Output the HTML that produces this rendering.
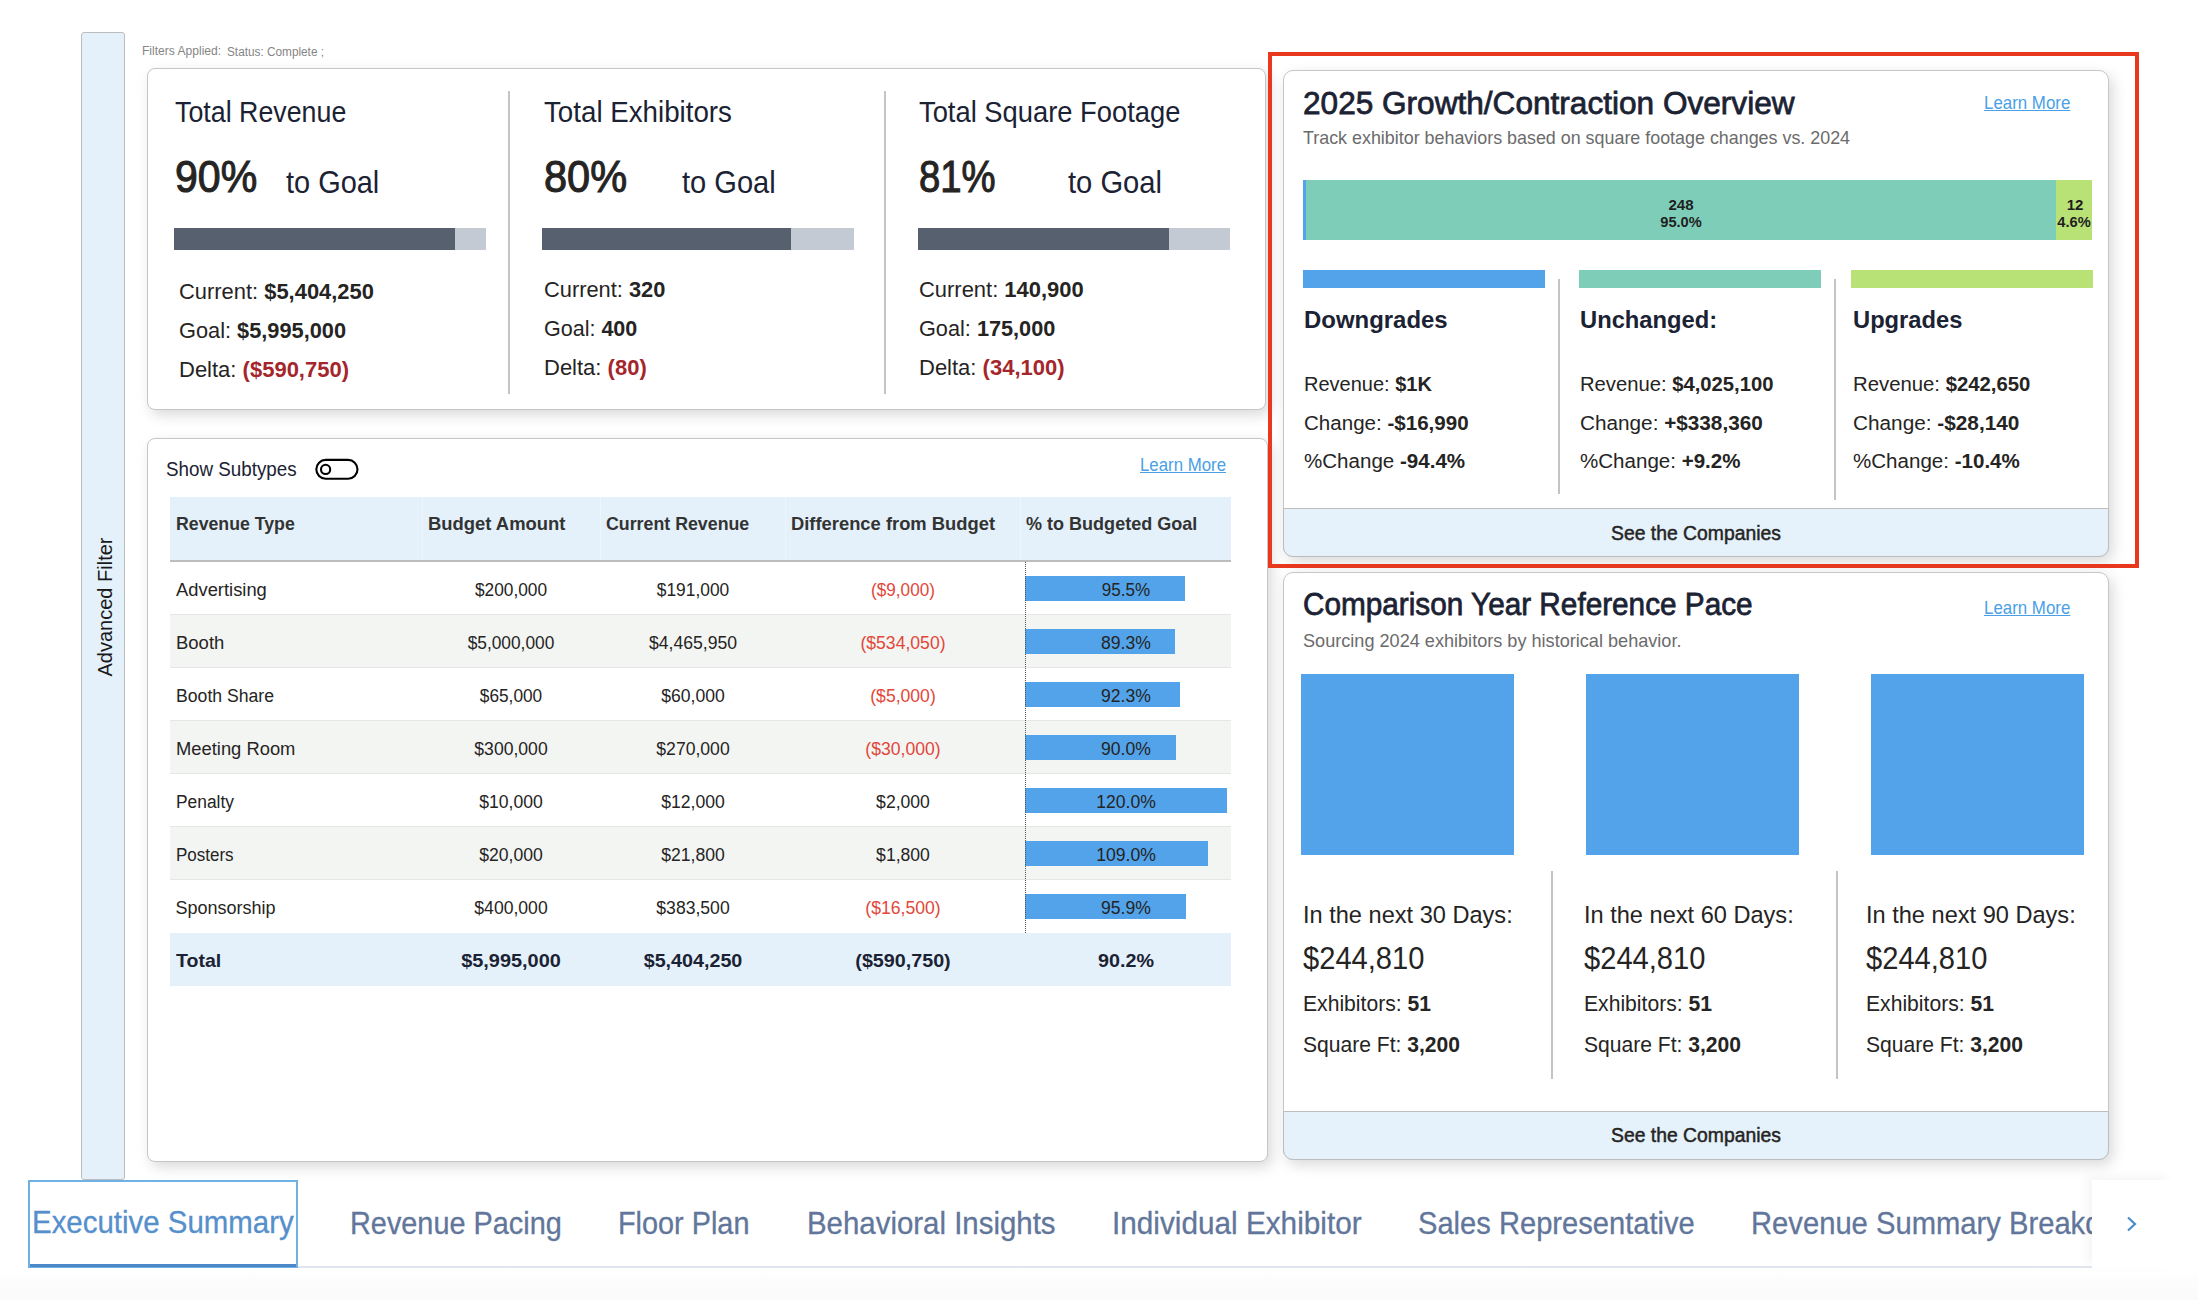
<!DOCTYPE html>
<html><head><meta charset="utf-8"><style>
html,body{margin:0;padding:0;}
body{width:2198px;height:1300px;position:relative;overflow:hidden;background:#fff;font-family:"Liberation Sans",sans-serif;}
.t{position:absolute;white-space:nowrap;line-height:1;}
b{font-weight:700;}
</style></head><body>
<div style="position:absolute;left:0px;top:1268px;width:2198px;height:32px;background:linear-gradient(#fff,#fdfdfd 35%,#fbfbfb);"></div>
<div style="position:absolute;left:81px;top:32px;width:44px;height:1148px;box-sizing:border-box;background:#e4f1fa;border:1.5px solid #bdbdbd;border-radius:3px;"></div>
<div class="t" style="left:104.5px;top:607px;font-size:20px;color:#1a1a1a;transform:translate(-50%,-50%) rotate(-90deg);">Advanced Filter</div>
<div class="t" style="left:142.0px;top:44.6px;font-size:12.5px;color:#858585;font-weight:400;transform-origin:0 0;transform:scaleX(0.9651);"><span>Filters Applied:</span></div>
<div class="t" style="left:227.0px;top:45.6px;font-size:12.5px;color:#858585;font-weight:400;transform-origin:0 0;transform:scaleX(0.9434);"><span>Status: Complete ;</span></div>
<div style="position:absolute;left:147px;top:68px;width:1119px;height:342px;box-sizing:border-box;border:1.5px solid #c6c6c6;border-radius:8px;background:#fff;box-shadow:4px 5px 14px rgba(0,0,0,0.15);"></div>
<div style="position:absolute;left:508px;top:91px;width:2px;height:303px;background:#c4c4c4;"></div>
<div style="position:absolute;left:884px;top:91px;width:2px;height:303px;background:#c4c4c4;"></div>
<div class="t" style="left:175.0px;top:97.3px;font-size:29.5px;color:#1b2233;font-weight:400;transform-origin:0 0;transform:scaleX(0.9083);"><span>Total Revenue</span></div>
<div class="t" style="left:175.0px;top:154.6px;font-size:44.5px;color:#252423;font-weight:400;transform-origin:0 0;transform:scaleX(0.9224);-webkit-text-stroke:1.07px currentColor;"><span>90%</span></div>
<div class="t" style="left:286.0px;top:166.5px;font-size:30.5px;color:#1b2233;font-weight:400;transform-origin:0 0;transform:scaleX(0.9480);"><span>to Goal</span></div>
<div style="position:absolute;left:174px;top:228px;width:312px;height:22px;background:#c4cad4;"></div>
<div style="position:absolute;left:174px;top:228px;width:281px;height:22px;background:#56606f;"></div>
<div class="t" style="left:179.0px;top:281.4px;font-size:22px;color:#252423;font-weight:400;transform-origin:0 0;transform:scaleX(0.9960);"><span>Current: <b>$5,404,250</b></span></div>
<div class="t" style="left:179.0px;top:320.0px;font-size:22px;color:#252423;font-weight:400;transform-origin:0 0;transform:scaleX(0.9893);"><span>Goal: <b>$5,995,000</b></span></div>
<div class="t" style="left:179.0px;top:358.6px;font-size:22px;color:#252423;font-weight:400;transform-origin:0 0;"><span>Delta: <b style="color:#a4262c">($590,750)</b></span></div>
<div class="t" style="left:544.0px;top:97.3px;font-size:29.5px;color:#1b2233;font-weight:400;transform-origin:0 0;transform:scaleX(0.9396);"><span>Total Exhibitors</span></div>
<div class="t" style="left:544.0px;top:154.6px;font-size:44.5px;color:#252423;font-weight:400;transform-origin:0 0;transform:scaleX(0.9328);-webkit-text-stroke:1.07px currentColor;"><span>80%</span></div>
<div class="t" style="left:682.0px;top:166.5px;font-size:30.5px;color:#1b2233;font-weight:400;transform-origin:0 0;transform:scaleX(0.9532);"><span>to Goal</span></div>
<div style="position:absolute;left:542px;top:228px;width:312px;height:22px;background:#c4cad4;"></div>
<div style="position:absolute;left:542px;top:228px;width:249px;height:22px;background:#56606f;"></div>
<div class="t" style="left:544.0px;top:279.4px;font-size:22px;color:#252423;font-weight:400;transform-origin:0 0;transform:scaleX(0.9918);"><span>Current: <b>320</b></span></div>
<div class="t" style="left:544.0px;top:318.0px;font-size:22px;color:#252423;font-weight:400;transform-origin:0 0;transform:scaleX(0.9777);"><span>Goal: <b>400</b></span></div>
<div class="t" style="left:544.0px;top:356.6px;font-size:22px;color:#252423;font-weight:400;transform-origin:0 0;"><span>Delta: <b style="color:#a4262c">(80)</b></span></div>
<div class="t" style="left:919.0px;top:97.3px;font-size:29.5px;color:#1b2233;font-weight:400;transform-origin:0 0;transform:scaleX(0.9267);"><span>Total Square Footage</span></div>
<div class="t" style="left:919.0px;top:154.6px;font-size:44.5px;color:#252423;font-weight:400;transform-origin:0 0;transform:scaleX(0.8599);-webkit-text-stroke:1.07px currentColor;"><span>81%</span></div>
<div class="t" style="left:1068.0px;top:166.5px;font-size:30.5px;color:#1b2233;font-weight:400;transform-origin:0 0;transform:scaleX(0.9553);"><span>to Goal</span></div>
<div style="position:absolute;left:918px;top:228px;width:312px;height:22px;background:#c4cad4;"></div>
<div style="position:absolute;left:918px;top:228px;width:251px;height:22px;background:#56606f;"></div>
<div class="t" style="left:919.0px;top:279.4px;font-size:22px;color:#252423;font-weight:400;transform-origin:0 0;transform:scaleX(0.9969);"><span>Current: <b>140,900</b></span></div>
<div class="t" style="left:919.0px;top:318.0px;font-size:22px;color:#252423;font-weight:400;transform-origin:0 0;transform:scaleX(0.9860);"><span>Goal: <b>175,000</b></span></div>
<div class="t" style="left:919.0px;top:356.6px;font-size:22px;color:#252423;font-weight:400;transform-origin:0 0;"><span>Delta: <b style="color:#a4262c">(34,100)</b></span></div>
<div style="position:absolute;left:147px;top:438px;width:1121px;height:724px;box-sizing:border-box;border:1.5px solid #c6c6c6;border-radius:8px;background:#fff;box-shadow:4px 5px 14px rgba(0,0,0,0.15);"></div>
<div class="t" style="left:166.0px;top:459.1px;font-size:20.3px;color:#1b2233;font-weight:400;transform-origin:0 0;transform:scaleX(0.9268);"><span>Show Subtypes</span></div>
<svg style="position:absolute;left:0;top:0" width="400" height="500"><rect x="316.3" y="459.9" width="41.2" height="18.8" rx="9.4" fill="none" stroke="#000" stroke-width="2.1"/><circle cx="325.6" cy="469.4" r="4.6" fill="none" stroke="#000" stroke-width="2.1"/></svg>
<div class="t" style="left:1140.0px;top:455.8px;font-size:18px;color:#4a9fe5;font-weight:400;transform-origin:0 0;transform:scaleX(0.9343);text-decoration:underline;"><span>Learn More</span></div>
<div style="position:absolute;left:170px;top:497px;width:1061px;height:64px;background:#e4f1fa;"></div>
<div style="position:absolute;left:422px;top:497px;width:1px;height:64px;background:#eef6fc;"></div>
<div style="position:absolute;left:600px;top:497px;width:1px;height:64px;background:#eef6fc;"></div>
<div style="position:absolute;left:785px;top:497px;width:1px;height:64px;background:#eef6fc;"></div>
<div style="position:absolute;left:1020px;top:497px;width:1px;height:64px;background:#eef6fc;"></div>
<div style="position:absolute;left:170px;top:560px;width:1061px;height:2px;background:#bdbdbd;"></div>
<div class="t" style="left:175.5px;top:514.6px;font-size:18.2px;color:#333;font-weight:700;transform-origin:0 0;transform:scaleX(0.9737);"><span>Revenue Type</span></div>
<div class="t" style="left:427.5px;top:514.6px;font-size:18.2px;color:#333;font-weight:700;transform-origin:0 0;transform:scaleX(1.0124);"><span>Budget Amount</span></div>
<div class="t" style="left:605.5px;top:514.6px;font-size:18.2px;color:#333;font-weight:700;transform-origin:0 0;transform:scaleX(0.9775);"><span>Current Revenue</span></div>
<div class="t" style="left:790.5px;top:514.6px;font-size:18.2px;color:#333;font-weight:700;transform-origin:0 0;transform:scaleX(1.0094);"><span>Difference from Budget</span></div>
<div class="t" style="left:1025.5px;top:514.6px;font-size:18.2px;color:#333;font-weight:700;transform-origin:0 0;transform:scaleX(0.9913);"><span>% to Budgeted Goal</span></div>
<div class="t" style="left:175.5px;top:580.8px;font-size:18px;color:#252423;font-weight:400;transform-origin:0 0;transform:scaleX(1.0197);"><span>Advertising</span></div>
<div class="t" style="left:-89.0px;width:1200px;text-align:center;top:580.8px;font-size:18px;color:#252423;font-weight:400;transform-origin:50% 0;transform:scaleX(0.9608);"><span>$200,000</span></div>
<div class="t" style="left:92.5px;width:1200px;text-align:center;top:580.8px;font-size:18px;color:#252423;font-weight:400;transform-origin:50% 0;transform:scaleX(0.9649);"><span>$191,000</span></div>
<div class="t" style="left:302.5px;width:1200px;text-align:center;top:580.8px;font-size:18px;color:#e2473a;font-weight:400;transform-origin:50% 0;transform:scaleX(0.9520);"><span>($9,000)</span></div>
<div style="position:absolute;left:1025px;top:576px;width:160px;height:25px;background:#52a3ea;"></div>
<div class="t" style="left:525.5px;width:1200px;text-align:center;top:580.8px;font-size:18px;color:#252423;font-weight:400;transform-origin:50% 0;transform:scaleX(0.9466);"><span>95.5%</span></div>
<div style="position:absolute;left:170px;top:615px;width:1061px;height:53px;background:#f3f5f3;"></div>
<div style="position:absolute;left:170px;top:614px;width:1061px;height:1px;background:#e6e6e6;"></div>
<div class="t" style="left:175.5px;top:633.8px;font-size:18px;color:#252423;font-weight:400;transform-origin:0 0;transform:scaleX(1.0268);"><span>Booth</span></div>
<div class="t" style="left:-89.0px;width:1200px;text-align:center;top:633.8px;font-size:18px;color:#252423;font-weight:400;transform-origin:50% 0;transform:scaleX(0.9617);"><span>$5,000,000</span></div>
<div class="t" style="left:92.5px;width:1200px;text-align:center;top:633.8px;font-size:18px;color:#252423;font-weight:400;transform-origin:50% 0;transform:scaleX(0.9769);"><span>$4,465,950</span></div>
<div class="t" style="left:302.5px;width:1200px;text-align:center;top:633.8px;font-size:18px;color:#e2473a;font-weight:400;transform-origin:50% 0;transform:scaleX(0.9769);"><span>($534,050)</span></div>
<div style="position:absolute;left:1025px;top:629px;width:150px;height:25px;background:#52a3ea;"></div>
<div class="t" style="left:525.5px;width:1200px;text-align:center;top:633.8px;font-size:18px;color:#252423;font-weight:400;transform-origin:50% 0;transform:scaleX(0.9769);"><span>89.3%</span></div>
<div style="position:absolute;left:170px;top:667px;width:1061px;height:1px;background:#e6e6e6;"></div>
<div class="t" style="left:175.5px;top:686.8px;font-size:18px;color:#252423;font-weight:400;transform-origin:0 0;transform:scaleX(0.9798);"><span>Booth Share</span></div>
<div class="t" style="left:-89.0px;width:1200px;text-align:center;top:686.8px;font-size:18px;color:#252423;font-weight:400;transform-origin:50% 0;transform:scaleX(0.9594);"><span>$65,000</span></div>
<div class="t" style="left:92.5px;width:1200px;text-align:center;top:686.8px;font-size:18px;color:#252423;font-weight:400;transform-origin:50% 0;transform:scaleX(0.9769);"><span>$60,000</span></div>
<div class="t" style="left:302.5px;width:1200px;text-align:center;top:686.8px;font-size:18px;color:#e2473a;font-weight:400;transform-origin:50% 0;transform:scaleX(0.9769);"><span>($5,000)</span></div>
<div style="position:absolute;left:1025px;top:682px;width:155px;height:25px;background:#52a3ea;"></div>
<div class="t" style="left:525.5px;width:1200px;text-align:center;top:686.8px;font-size:18px;color:#252423;font-weight:400;transform-origin:50% 0;transform:scaleX(0.9769);"><span>92.3%</span></div>
<div style="position:absolute;left:170px;top:721px;width:1061px;height:53px;background:#f3f5f3;"></div>
<div style="position:absolute;left:170px;top:720px;width:1061px;height:1px;background:#e6e6e6;"></div>
<div class="t" style="left:175.5px;top:739.8px;font-size:18px;color:#252423;font-weight:400;transform-origin:0 0;transform:scaleX(1.0200);"><span>Meeting Room</span></div>
<div class="t" style="left:-89.0px;width:1200px;text-align:center;top:739.8px;font-size:18px;color:#252423;font-weight:400;transform-origin:50% 0;transform:scaleX(0.9769);"><span>$300,000</span></div>
<div class="t" style="left:92.5px;width:1200px;text-align:center;top:739.8px;font-size:18px;color:#252423;font-weight:400;transform-origin:50% 0;transform:scaleX(0.9769);"><span>$270,000</span></div>
<div class="t" style="left:302.5px;width:1200px;text-align:center;top:739.8px;font-size:18px;color:#e2473a;font-weight:400;transform-origin:50% 0;transform:scaleX(0.9769);"><span>($30,000)</span></div>
<div style="position:absolute;left:1025px;top:735px;width:151px;height:25px;background:#52a3ea;"></div>
<div class="t" style="left:525.5px;width:1200px;text-align:center;top:739.8px;font-size:18px;color:#252423;font-weight:400;transform-origin:50% 0;transform:scaleX(0.9769);"><span>90.0%</span></div>
<div style="position:absolute;left:170px;top:773px;width:1061px;height:1px;background:#e6e6e6;"></div>
<div class="t" style="left:175.5px;top:792.8px;font-size:18px;color:#252423;font-weight:400;transform-origin:0 0;transform:scaleX(0.9650);"><span>Penalty</span></div>
<div class="t" style="left:-89.0px;width:1200px;text-align:center;top:792.8px;font-size:18px;color:#252423;font-weight:400;transform-origin:50% 0;transform:scaleX(0.9769);"><span>$10,000</span></div>
<div class="t" style="left:92.5px;width:1200px;text-align:center;top:792.8px;font-size:18px;color:#252423;font-weight:400;transform-origin:50% 0;transform:scaleX(0.9769);"><span>$12,000</span></div>
<div class="t" style="left:302.5px;width:1200px;text-align:center;top:792.8px;font-size:18px;color:#252423;font-weight:400;transform-origin:50% 0;transform:scaleX(0.9769);"><span>$2,000</span></div>
<div style="position:absolute;left:1025px;top:788px;width:202px;height:25px;background:#52a3ea;"></div>
<div class="t" style="left:525.5px;width:1200px;text-align:center;top:792.8px;font-size:18px;color:#252423;font-weight:400;transform-origin:50% 0;transform:scaleX(0.9769);"><span>120.0%</span></div>
<div style="position:absolute;left:170px;top:827px;width:1061px;height:53px;background:#f3f5f3;"></div>
<div style="position:absolute;left:170px;top:826px;width:1061px;height:1px;background:#e6e6e6;"></div>
<div class="t" style="left:175.5px;top:845.8px;font-size:18px;color:#252423;font-weight:400;transform-origin:0 0;transform:scaleX(0.9441);"><span>Posters</span></div>
<div class="t" style="left:-89.0px;width:1200px;text-align:center;top:845.8px;font-size:18px;color:#252423;font-weight:400;transform-origin:50% 0;transform:scaleX(0.9769);"><span>$20,000</span></div>
<div class="t" style="left:92.5px;width:1200px;text-align:center;top:845.8px;font-size:18px;color:#252423;font-weight:400;transform-origin:50% 0;transform:scaleX(0.9769);"><span>$21,800</span></div>
<div class="t" style="left:302.5px;width:1200px;text-align:center;top:845.8px;font-size:18px;color:#252423;font-weight:400;transform-origin:50% 0;transform:scaleX(0.9769);"><span>$1,800</span></div>
<div style="position:absolute;left:1025px;top:841px;width:183px;height:25px;background:#52a3ea;"></div>
<div class="t" style="left:525.5px;width:1200px;text-align:center;top:845.8px;font-size:18px;color:#252423;font-weight:400;transform-origin:50% 0;transform:scaleX(0.9769);"><span>109.0%</span></div>
<div style="position:absolute;left:170px;top:879px;width:1061px;height:1px;background:#e6e6e6;"></div>
<div class="t" style="left:175.5px;top:898.8px;font-size:18px;color:#252423;font-weight:400;transform-origin:0 0;"><span>Sponsorship</span></div>
<div class="t" style="left:-89.0px;width:1200px;text-align:center;top:898.8px;font-size:18px;color:#252423;font-weight:400;transform-origin:50% 0;transform:scaleX(0.9769);"><span>$400,000</span></div>
<div class="t" style="left:92.5px;width:1200px;text-align:center;top:898.8px;font-size:18px;color:#252423;font-weight:400;transform-origin:50% 0;transform:scaleX(0.9769);"><span>$383,500</span></div>
<div class="t" style="left:302.5px;width:1200px;text-align:center;top:898.8px;font-size:18px;color:#e2473a;font-weight:400;transform-origin:50% 0;transform:scaleX(0.9769);"><span>($16,500)</span></div>
<div style="position:absolute;left:1025px;top:894px;width:161px;height:25px;background:#52a3ea;"></div>
<div class="t" style="left:525.5px;width:1200px;text-align:center;top:898.8px;font-size:18px;color:#252423;font-weight:400;transform-origin:50% 0;transform:scaleX(0.9769);"><span>95.9%</span></div>
<div style="position:absolute;left:1025px;top:562px;width:1px;height:371px;border-left:1px dotted #555;"></div>
<div style="position:absolute;left:170px;top:933px;width:1061px;height:53px;background:#e4f1fa;"></div>
<div class="t" style="left:175.5px;top:950.9px;font-size:19px;color:#1b2233;font-weight:700;transform-origin:0 0;transform:scaleX(1.0270);"><span>Total</span></div>
<div class="t" style="left:-89.0px;width:1200px;text-align:center;top:950.9px;font-size:19px;color:#1b2233;font-weight:700;transform-origin:50% 0;transform:scaleX(1.0484);"><span>$5,995,000</span></div>
<div class="t" style="left:92.5px;width:1200px;text-align:center;top:950.9px;font-size:19px;color:#1b2233;font-weight:700;transform-origin:50% 0;transform:scaleX(1.0377);"><span>$5,404,250</span></div>
<div class="t" style="left:302.5px;width:1200px;text-align:center;top:950.9px;font-size:19px;color:#1b2233;font-weight:700;transform-origin:50% 0;transform:scaleX(1.0377);"><span>($590,750)</span></div>
<div class="t" style="left:525.5px;width:1200px;text-align:center;top:950.9px;font-size:19px;color:#1b2233;font-weight:700;transform-origin:50% 0;transform:scaleX(1.0377);"><span>90.2%</span></div>
<div style="position:absolute;left:1283px;top:70px;width:826px;height:487px;box-sizing:border-box;border:1.5px solid #c6c6c6;border-radius:8px;background:#fff;box-shadow:4px 5px 14px rgba(0,0,0,0.15);border-radius:10px;"></div>
<div class="t" style="left:1303.0px;top:86.5px;font-size:32px;color:#1b2233;font-weight:400;transform-origin:0 0;transform:scaleX(0.9870);-webkit-text-stroke:0.77px currentColor;"><span>2025 Growth/Contraction Overview</span></div>
<div class="t" style="left:1984.0px;top:94.3px;font-size:18.5px;color:#4a9fe5;font-weight:400;transform-origin:0 0;transform:scaleX(0.9123);text-decoration:underline;"><span>Learn More</span></div>
<div class="t" style="left:1303.0px;top:129.3px;font-size:18.6px;color:#6b6b6b;font-weight:400;transform-origin:0 0;transform:scaleX(0.9617);"><span>Track exhibitor behaviors based on square footage changes vs. 2024</span></div>
<div style="position:absolute;left:1303px;top:180px;width:789px;height:60px;background:#7ecdb9;"></div>
<div style="position:absolute;left:1303px;top:180px;width:3px;height:60px;background:#52a3ea;"></div>
<div style="position:absolute;left:2056px;top:180px;width:36px;height:60px;background:#b8e176;"></div>
<div class="t" style="left:1081.0px;width:1200px;text-align:center;top:197.7px;font-size:14.5px;color:#1f1f1f;font-weight:700;transform-origin:50% 0;transform:scaleX(1.0414);"><span>248</span></div>
<div class="t" style="left:1081.0px;width:1200px;text-align:center;top:214.7px;font-size:14.5px;color:#1f1f1f;font-weight:700;transform-origin:50% 0;transform:scaleX(1.0086);"><span>95.0%</span></div>
<div class="t" style="left:1474.7px;width:1200px;text-align:center;top:197.7px;font-size:14.5px;color:#1f1f1f;font-weight:700;transform-origin:50% 0;transform:scaleX(1.0347);"><span>12</span></div>
<div class="t" style="left:1473.8px;width:1200px;text-align:center;top:214.7px;font-size:14.5px;color:#1f1f1f;font-weight:700;transform-origin:50% 0;transform:scaleX(1.0095);"><span>4.6%</span></div>
<div style="position:absolute;left:1303px;top:270px;width:242px;height:18px;background:#52a3ea;"></div>
<div style="position:absolute;left:1579px;top:270px;width:242px;height:18px;background:#7ecdb9;"></div>
<div style="position:absolute;left:1851px;top:270px;width:242px;height:18px;background:#b8e176;"></div>
<div style="position:absolute;left:1558px;top:279px;width:2px;height:215px;background:#c4c4c4;"></div>
<div style="position:absolute;left:1834px;top:279px;width:2px;height:221px;background:#c4c4c4;"></div>
<div class="t" style="left:1304.0px;top:308.4px;font-size:24.5px;color:#1b2233;font-weight:700;transform-origin:0 0;transform:scaleX(0.9769);"><span>Downgrades</span></div>
<div class="t" style="left:1304.0px;top:375.1px;font-size:19.6px;color:#252423;font-weight:400;transform-origin:0 0;transform:scaleX(1.0209);"><span>Revenue: <b>$1K</b></span></div>
<div class="t" style="left:1304.0px;top:413.6px;font-size:19.6px;color:#252423;font-weight:400;transform-origin:0 0;transform:scaleX(1.0493);"><span>Change: <b>-$16,990</b></span></div>
<div class="t" style="left:1304.0px;top:452.1px;font-size:19.6px;color:#252423;font-weight:400;transform-origin:0 0;transform:scaleX(1.0490);"><span>%Change <b>-94.4%</b></span></div>
<div class="t" style="left:1580.0px;top:308.4px;font-size:24.5px;color:#1b2233;font-weight:700;transform-origin:0 0;transform:scaleX(0.9693);"><span>Unchanged:</span></div>
<div class="t" style="left:1580.0px;top:375.1px;font-size:19.6px;color:#252423;font-weight:400;transform-origin:0 0;transform:scaleX(1.0320);"><span>Revenue: <b>$4,025,100</b></span></div>
<div class="t" style="left:1580.0px;top:413.6px;font-size:19.6px;color:#252423;font-weight:400;transform-origin:0 0;transform:scaleX(1.0582);"><span>Change: <b>+$338,360</b></span></div>
<div class="t" style="left:1580.0px;top:452.1px;font-size:19.6px;color:#252423;font-weight:400;transform-origin:0 0;transform:scaleX(1.0488);"><span>%Change: <b>+9.2%</b></span></div>
<div class="t" style="left:1853.0px;top:308.4px;font-size:24.5px;color:#1b2233;font-weight:700;transform-origin:0 0;transform:scaleX(0.9683);"><span>Upgrades</span></div>
<div class="t" style="left:1853.0px;top:375.1px;font-size:19.6px;color:#252423;font-weight:400;transform-origin:0 0;transform:scaleX(1.0372);"><span>Revenue: <b>$242,650</b></span></div>
<div class="t" style="left:1853.0px;top:413.6px;font-size:19.6px;color:#252423;font-weight:400;transform-origin:0 0;transform:scaleX(1.0603);"><span>Change: <b>-$28,140</b></span></div>
<div class="t" style="left:1853.0px;top:452.1px;font-size:19.6px;color:#252423;font-weight:400;transform-origin:0 0;transform:scaleX(1.0489);"><span>%Change: <b>-10.4%</b></span></div>
<div style="position:absolute;left:1283px;top:508px;width:826px;height:49px;box-sizing:border-box;background:#e5f2fb;border:1.5px solid #bdbdbd;border-radius:0 0 10px 10px;"></div>
<div class="t" style="left:1096.4px;width:1200px;text-align:center;top:522.7px;font-size:20px;color:#252423;font-weight:400;transform-origin:50% 0;transform:scaleX(0.9664);-webkit-text-stroke:0.48px currentColor;"><span>See the Companies</span></div>
<div style="position:absolute;left:1268px;top:52px;width:871px;height:516px;box-sizing:border-box;border:4px solid #e8391e;"></div>
<div style="position:absolute;left:1283px;top:572px;width:826px;height:588px;box-sizing:border-box;border:1.5px solid #c6c6c6;border-radius:8px;background:#fff;box-shadow:4px 5px 14px rgba(0,0,0,0.15);border-radius:10px;"></div>
<div class="t" style="left:1303.0px;top:588.4px;font-size:32px;color:#1b2233;font-weight:400;transform-origin:0 0;transform:scaleX(0.9292);-webkit-text-stroke:0.77px currentColor;"><span>Comparison Year Reference Pace</span></div>
<div class="t" style="left:1984.0px;top:598.9px;font-size:18.5px;color:#4a9fe5;font-weight:400;transform-origin:0 0;transform:scaleX(0.9123);text-decoration:underline;"><span>Learn More</span></div>
<div class="t" style="left:1303.0px;top:631.8px;font-size:18.6px;color:#6b6b6b;font-weight:400;transform-origin:0 0;transform:scaleX(0.9739);"><span>Sourcing 2024 exhibitors by historical behavior.</span></div>
<div style="position:absolute;left:1301px;top:674px;width:213px;height:181px;background:#52a3ea;"></div>
<div style="position:absolute;left:1586px;top:674px;width:213px;height:181px;background:#52a3ea;"></div>
<div style="position:absolute;left:1871px;top:674px;width:213px;height:181px;background:#52a3ea;"></div>
<div style="position:absolute;left:1551px;top:871px;width:2px;height:208px;background:#c4c4c4;"></div>
<div style="position:absolute;left:1836px;top:871px;width:2px;height:208px;background:#c4c4c4;"></div>
<div class="t" style="left:1303.0px;top:903.5px;font-size:23.7px;color:#252423;font-weight:400;transform-origin:0 0;transform:scaleX(0.9953);"><span>In the next 30 Days:</span></div>
<div class="t" style="left:1303.0px;top:943.9px;font-size:30.8px;color:#252423;font-weight:400;transform-origin:0 0;transform:scaleX(0.9454);"><span>$244,810</span></div>
<div class="t" style="left:1303.0px;top:993.6px;font-size:21.5px;color:#252423;font-weight:400;transform-origin:0 0;transform:scaleX(0.9822);"><span>Exhibitors: <b>51</b></span></div>
<div class="t" style="left:1303.0px;top:1034.5px;font-size:21.5px;color:#252423;font-weight:400;transform-origin:0 0;transform:scaleX(0.9800);"><span>Square Ft: <b>3,200</b></span></div>
<div class="t" style="left:1584.3px;top:903.5px;font-size:23.7px;color:#252423;font-weight:400;transform-origin:0 0;transform:scaleX(0.9953);"><span>In the next 60 Days:</span></div>
<div class="t" style="left:1584.3px;top:943.9px;font-size:30.8px;color:#252423;font-weight:400;transform-origin:0 0;transform:scaleX(0.9454);"><span>$244,810</span></div>
<div class="t" style="left:1584.3px;top:993.6px;font-size:21.5px;color:#252423;font-weight:400;transform-origin:0 0;transform:scaleX(0.9822);"><span>Exhibitors: <b>51</b></span></div>
<div class="t" style="left:1584.3px;top:1034.5px;font-size:21.5px;color:#252423;font-weight:400;transform-origin:0 0;transform:scaleX(0.9800);"><span>Square Ft: <b>3,200</b></span></div>
<div class="t" style="left:1866.3px;top:903.5px;font-size:23.7px;color:#252423;font-weight:400;transform-origin:0 0;transform:scaleX(0.9953);"><span>In the next 90 Days:</span></div>
<div class="t" style="left:1866.3px;top:943.9px;font-size:30.8px;color:#252423;font-weight:400;transform-origin:0 0;transform:scaleX(0.9454);"><span>$244,810</span></div>
<div class="t" style="left:1866.3px;top:993.6px;font-size:21.5px;color:#252423;font-weight:400;transform-origin:0 0;transform:scaleX(0.9822);"><span>Exhibitors: <b>51</b></span></div>
<div class="t" style="left:1866.3px;top:1034.5px;font-size:21.5px;color:#252423;font-weight:400;transform-origin:0 0;transform:scaleX(0.9800);"><span>Square Ft: <b>3,200</b></span></div>
<div style="position:absolute;left:1283px;top:1111px;width:826px;height:49px;box-sizing:border-box;background:#e5f2fb;border:1.5px solid #bdbdbd;border-radius:0 0 10px 10px;"></div>
<div class="t" style="left:1096.4px;width:1200px;text-align:center;top:1124.8px;font-size:20px;color:#252423;font-weight:400;transform-origin:50% 0;transform:scaleX(0.9664);-webkit-text-stroke:0.48px currentColor;"><span>See the Companies</span></div>
<div style="position:absolute;left:28px;top:1266px;width:2064px;height:2px;background:#e0e5ee;"></div>
<div style="position:absolute;left:28px;top:1180px;width:270px;height:88px;box-sizing:border-box;border:2px solid #6db1e5;"></div>
<div style="position:absolute;left:30px;top:1264px;width:266px;height:2.5px;background:#4a88c8;"></div>
<div class="t" style="left:32.0px;top:1206.5px;font-size:30.5px;color:#558fcc;font-weight:400;transform-origin:0 0;transform:scaleX(0.9648);-webkit-text-stroke:0.3px currentColor;"><span>Executive Summary</span></div>
<div style="position:absolute;left:0;top:1180px;width:2092px;height:85px;overflow:hidden;">
<div class="t" style="left:350.0px;top:28.4px;font-size:30.5px;color:#61769a;font-weight:400;transform-origin:0 0;transform:scaleX(0.9460);-webkit-text-stroke:0.3px currentColor;"><span>Revenue Pacing</span></div>
<div class="t" style="left:618.0px;top:28.4px;font-size:30.5px;color:#61769a;font-weight:400;transform-origin:0 0;transform:scaleX(0.9454);-webkit-text-stroke:0.3px currentColor;"><span>Floor Plan</span></div>
<div class="t" style="left:806.5px;top:28.4px;font-size:30.5px;color:#61769a;font-weight:400;transform-origin:0 0;transform:scaleX(0.9645);-webkit-text-stroke:0.3px currentColor;"><span>Behavioral Insights</span></div>
<div class="t" style="left:1111.5px;top:28.4px;font-size:30.5px;color:#61769a;font-weight:400;transform-origin:0 0;transform:scaleX(0.9749);-webkit-text-stroke:0.3px currentColor;"><span>Individual Exhibitor</span></div>
<div class="t" style="left:1418.0px;top:28.4px;font-size:30.5px;color:#61769a;font-weight:400;transform-origin:0 0;transform:scaleX(0.9545);-webkit-text-stroke:0.3px currentColor;"><span>Sales Representative</span></div>
<div class="t" style="left:1751.0px;top:28.4px;font-size:30.5px;color:#61769a;font-weight:400;transform-origin:0 0;transform:scaleX(0.9571);-webkit-text-stroke:0.3px currentColor;"><span>Revenue Summary Breakdown</span></div>
</div>
<div style="position:absolute;left:2092px;top:1180px;width:80px;height:88px;background:#fff;box-shadow:-5px -4px 10px rgba(0,0,0,0.045);"></div>
<svg style="position:absolute;left:2124px;top:1214px" width="16" height="20" viewBox="0 0 16 20"><path d="M4 3.5 L11 10 L4 16.5" fill="none" stroke="#4a8ccc" stroke-width="2.2"/></svg>
</body></html>
